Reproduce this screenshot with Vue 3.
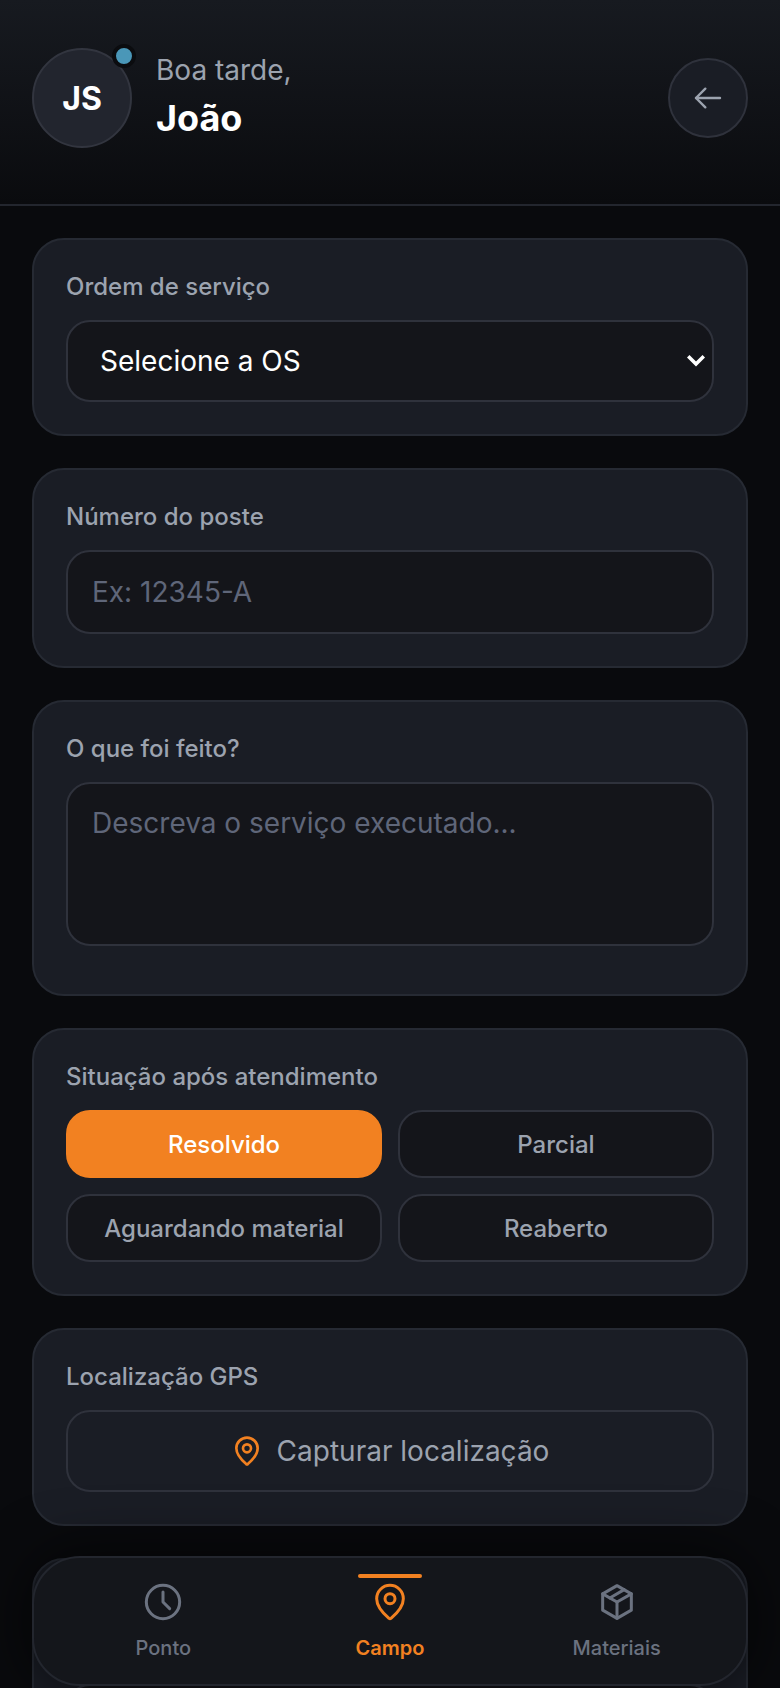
<script setup>
const situacoes = ['Resolvido', 'Parcial', 'Aguardando material', 'Reaberto']
</script>

<template>
  <div class="page">
    <header class="top">
      <div class="who">
        <div class="avatar">
          JS
          <span class="dot"></span>
        </div>
        <div class="hello">
          <p class="greet">Boa tarde,</p>
          <p class="name">João</p>
        </div>
      </div>
      <button type="button" class="back" aria-label="Voltar">
        <svg width="32" height="32" viewBox="0 0 24 24" fill="none" stroke="currentColor" stroke-width="1.8" stroke-linecap="round" stroke-linejoin="round">
          <path d="M21 12H3" />
          <path d="M10 19l-7-7 7-7" />
        </svg>
      </button>
    </header>

    <main class="form">
      <section class="card">
        <label class="label">Ordem de serviço</label>
        <div class="pick-wrap">
          <select class="field pick">
            <option>Selecione a OS</option>
          </select>
          <svg class="chevron" width="18" height="13" viewBox="0 0 18 13" fill="none" stroke="#fff" stroke-width="3.6">
            <path d="M1.2 2.2L9 10l7.8-7.8" />
          </svg>
        </div>
      </section>

      <section class="card">
        <label class="label">Número do poste</label>
        <input class="field tall" type="text" placeholder="Ex: 12345-A" />
      </section>

      <section class="card">
        <label class="label">O que foi feito?</label>
        <textarea class="field area" placeholder="Descreva o serviço executado..."></textarea>
      </section>

      <section class="card">
        <label class="label">Situação após atendimento</label>
        <div class="options">
          <button
            v-for="(s, i) in situacoes"
            :key="s"
            type="button"
            class="option"
            :class="{ selected: i === 0 }"
          >
            {{ s }}
          </button>
        </div>
      </section>

      <section class="card">
        <label class="label">Localização GPS</label>
        <button type="button" class="gps">
          <svg width="32" height="32" viewBox="0 0 24 24" fill="none" stroke="#f28121" stroke-width="2" stroke-linecap="round" stroke-linejoin="round">
            <path d="M20 10c0 4.993-5.539 10.193-7.399 11.799a1 1 0 0 1-1.202 0C9.539 20.193 4 14.993 4 10a8 8 0 0 1 16 0" />
            <circle cx="12" cy="10" r="3" />
          </svg>
          Capturar localização
        </button>
      </section>

      <section class="card">
        <div class="under-nav"></div>
      </section>
    </main>

    <nav class="tabs">
      <a class="tab">
        <svg width="40" height="40" viewBox="0 0 24 24" fill="none" stroke="currentColor" stroke-width="1.8" stroke-linecap="round" stroke-linejoin="round">
          <circle cx="12" cy="12" r="10" />
          <path d="M12 6v6l4 4" />
        </svg>
        <span>Ponto</span>
      </a>
      <a class="tab active">
        <i class="bar"></i>
        <svg width="40" height="40" viewBox="0 0 24 24" fill="none" stroke="currentColor" stroke-width="1.8" stroke-linecap="round" stroke-linejoin="round">
          <path d="M20 10c0 4.993-5.539 10.193-7.399 11.799a1 1 0 0 1-1.202 0C9.539 20.193 4 14.993 4 10a8 8 0 0 1 16 0" />
          <circle cx="12" cy="10" r="3" />
        </svg>
        <span>Campo</span>
      </a>
      <a class="tab">
        <svg width="40" height="40" viewBox="0 0 24 24" fill="none" stroke="currentColor" stroke-width="1.8" stroke-linecap="round" stroke-linejoin="round">
          <path d="M12 2.2l8.6 4.9v9.8L12 21.8l-8.6-4.9V7.1z" />
          <path d="M3.4 7.1L12 12l8.6-4.9" />
          <path d="M12 12v9.8" />
          <path d="M16.3 4.6L7.7 9.6" />
        </svg>
        <span>Materiais</span>
      </a>
    </nav>
  </div>
</template>

<style>
html,
body {
  margin: 0;
  background: #090a0d;
}
</style>

<style scoped>
.page {
  position: relative;
  height: 1688px;
  overflow: hidden;
  background: #090a0d;
  font-family: Inter, 'Liberation Sans', sans-serif;
  color: #fff;
}

.top {
  display: flex;
  align-items: center;
  justify-content: space-between;
  padding: 48px 32px 56px;
  border-bottom: 2px solid #23262e;
  background: linear-gradient(180deg, #171a20, #0a0b0e);
}

.who {
  display: flex;
  align-items: center;
  gap: 24px;
}

.avatar {
  position: relative;
  display: flex;
  align-items: center;
  justify-content: center;
  box-sizing: border-box;
  width: 100px;
  height: 100px;
  border-radius: 50%;
  border: 2px solid #32353f;
  background: #22252e;
  font-size: 32px;
  font-weight: 700;
}

.dot {
  position: absolute;
  top: -6px;
  right: -6px;
  box-sizing: border-box;
  width: 24px;
  height: 24px;
  border-radius: 50%;
  border: 4px solid #0b0c0f;
  background: #4a97b8;
}

.hello {
  padding-bottom: 4px;
}

.greet {
  margin: 0;
  font-size: 28px;
  line-height: 38px;
  color: #9ca3af;
}

.name {
  margin: 6px 0 0;
  font-size: 36px;
  line-height: 46px;
  font-weight: 700;
}

.back {
  display: flex;
  align-items: center;
  justify-content: center;
  box-sizing: border-box;
  width: 80px;
  height: 80px;
  padding: 0;
  border-radius: 50%;
  border: 2px solid #2f323c;
  background: #1a1d25;
  color: #9ca3af;
}

.form {
  display: flex;
  flex-direction: column;
  gap: 32px;
  padding: 32px;
}

.card {
  padding: 32px;
  border-radius: 32px;
  border: 2px solid #262a33;
  background: #1a1d25;
}

.label {
  display: block;
  margin-bottom: 18px;
  font-size: 24px;
  line-height: 30px;
  font-weight: 500;
  color: #9ca3af;
}

.field {
  display: block;
  box-sizing: border-box;
  width: 100%;
  height: 82px;
  padding: 0 24px;
  border-radius: 24px;
  border: 2px solid #2f323c;
  background: #14151a;
  color: #fff;
  font-family: inherit;
  font-size: 28px;
  outline: none;
}

.field::placeholder {
  color: #5f6679;
  opacity: 1;
}

.tall {
  height: 84px;
}

.pick-wrap {
  position: relative;
}

.pick {
  appearance: none;
  padding: 0 48px 0 32px;
}

.chevron {
  position: absolute;
  top: 34px;
  right: 9px;
  pointer-events: none;
}

.area {
  height: 164px;
  margin-bottom: 16px;
  padding: 20px 24px;
  line-height: 38px;
  resize: none;
}

.options {
  display: grid;
  grid-template-columns: 1fr 1fr;
  gap: 16px;
}

.option {
  box-sizing: border-box;
  height: 68px;
  padding: 0;
  border-radius: 24px;
  border: 2px solid #2f323c;
  background: #14151a;
  color: #9ca3af;
  font-family: inherit;
  font-size: 24px;
  font-weight: 500;
}

.option.selected {
  border-color: #f28121;
  background: #f28121;
  color: #fff;
}

.gps {
  display: flex;
  align-items: center;
  justify-content: center;
  gap: 14px;
  box-sizing: border-box;
  width: 100%;
  height: 82px;
  padding: 0;
  border-radius: 24px;
  border: 2px solid #2f323c;
  background: transparent;
  color: #9ca3af;
  font-family: inherit;
  font-size: 28px;
}

.under-nav {
  margin-top: 92px;
  height: 82px;
  border-radius: 24px;
  border: 2px solid #2f323c;
  background: #14151a;
}

.tabs {
  position: absolute;
  left: 32px;
  right: 32px;
  bottom: 2px;
  display: grid;
  grid-template-columns: repeat(3, 1fr);
  box-sizing: border-box;
  height: 130px;
  padding: 24px 16px 0;
  border-radius: 48px;
  border: 2px solid #23262e;
  background: #14161b;
  box-shadow: 0 0 60px rgba(0, 0, 0, 0.7);
}

.tab {
  position: relative;
  display: flex;
  flex-direction: column;
  align-items: center;
  gap: 12px;
  color: #6b7280;
  font-size: 20px;
  line-height: 28px;
  font-weight: 500;
}

.tab svg {
  display: block;
}

.tab.active {
  color: #f28121;
  font-weight: 600;
}

.bar {
  position: absolute;
  top: -8px;
  left: 50%;
  width: 64px;
  height: 4px;
  margin-left: -32px;
  border-radius: 2px;
  background: #f28121;
}
</style>
